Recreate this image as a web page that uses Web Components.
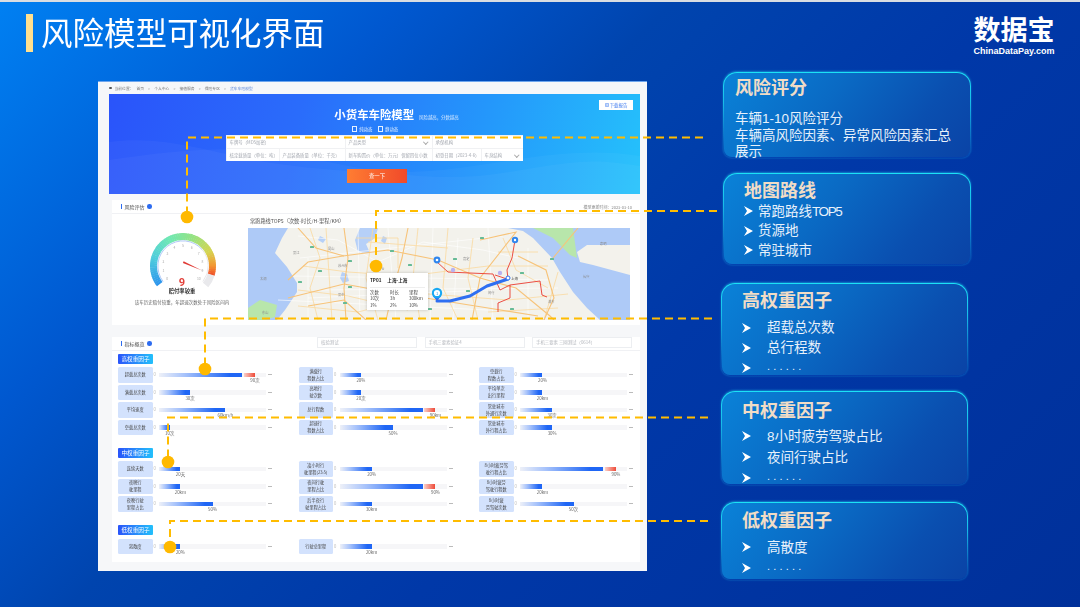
<!DOCTYPE html>
<html lang="zh-CN">
<head>
<meta charset="utf-8">
<title>风险模型可视化界面</title>
<style>
  html, body { margin: 0; padding: 0; }
  body { font-family: "Noto Sans CJK SC", "Noto Sans", sans-serif; }
</style>
</head>
<body>
<risk-slide>
  <slide-header slot="header" heading="风险模型可视化界面"></slide-header>

  <app-panel slot="panel">
    <hero-banner></hero-banner>
    <score-section></score-section>
    <metric-section>
      <metric-group tag="高权重因子">
        <metric-row value="90次" pct="78" over>超载总次数</metric-row>
        <metric-row value="20%" pct="20">满载行<br>程数占比</metric-row>
        <metric-row value="20%" pct="21">空载行<br>程数占比</metric-row>
        <metric-row value="30次" pct="29">满载总次数</metric-row>
        <metric-row value="20次" pct="20">高地行<br>驶次数</metric-row>
        <metric-row value="20km" pct="21">平均单次<br>出行里程</metric-row>
        <metric-row value="60km/h" pct="62">平均速度</metric-row>
        <metric-row value="90km" pct="78" over>总行程数</metric-row>
        <metric-row value="30次" pct="30">常驻城市<br>外通行次数</metric-row>
        <metric-row value="10次" pct="10">空载总次数</metric-row>
        <metric-row value="50%" pct="50">超速行<br>程数占比</metric-row>
        <metric-row value="30%" pct="30">常驻城市<br>外行程占比</metric-row>
      </metric-group>
      <metric-group tag="中权重因子">
        <metric-row value="20天" pct="20">连续天数</metric-row>
        <metric-row value="20%" pct="30">凌小时行<br>驶里程(23:5)</metric-row>
        <metric-row value="90%" pct="78" over>8小时疲劳驾<br>驶行程占比</metric-row>
        <metric-row value="20km" pct="20">夜晚行<br>驶里程</metric-row>
        <metric-row value="90%" pct="78" over>夜间行驶<br>里程占比</metric-row>
        <metric-row value="20km" pct="21">8小时疲劳<br>驾驶行程数</metric-row>
        <metric-row value="50%" pct="50">夜晚行驶<br>里程占比</metric-row>
        <metric-row value="30km" pct="30">后半夜行<br>驶里程占比</metric-row>
        <metric-row value="50次" pct="50">8小时疲<br>劳驾驶次数</metric-row>
      </metric-group>
      <metric-group tag="低权重因子" style="--tg:4px">
        <metric-row value="20%" pct="20">离散度</metric-row>
        <metric-row value="20km" pct="30">行驶总里程</metric-row>
      </metric-group>
    </metric-section>
  </app-panel>

  <info-card slot="cards" heading="风险评分" style="--w:248px;--h:86px;--ml:2px;--pt:2px;--tx:11px;--tb:12px">
    <p>车辆1-10风险评分<br>车辆高风险因素、异常风险因素汇总<br>展示</p>
  </info-card>
  <info-card slot="cards" heading="地图路线" style="--w:248px;--h:92px;--ml:2px;--mt:15px;--pt:4px;--tx:20px;--tb:-2px">
    <card-item style="--gap:5px;--lh:19.5px">常跑路线<span style="letter-spacing:-1.4px">TOP5</span></card-item>
    <card-item style="--gap:5px;--lh:19.5px">货源地</card-item>
    <card-item style="--gap:5px;--lh:19.5px">常驻城市</card-item>
  </info-card>
  <info-card slot="cards" heading="高权重因子" style="--w:247px;--h:93px;--mt:18px;--pt:4px;--tx:20px;--tb:4px">
    <card-item style="--gap:16px;--lh:20px">超载总次数</card-item>
    <card-item style="--gap:16px;--lh:20px">总行程数</card-item>
    <card-item dots style="--gap:16px;--lh:20px">......</card-item>
  </info-card>
  <info-card slot="cards" heading="中权重因子" style="--w:247px;--h:94px;--mt:15px;--pt:6px;--tx:20px;--tb:2px">
    <card-item style="--gap:16px;--lh:21px">8小时疲劳驾驶占比</card-item>
    <card-item style="--gap:16px;--lh:21px">夜间行驶占比</card-item>
    <card-item dots style="--gap:16px;--lh:21px">......</card-item>
  </info-card>
  <info-card slot="cards" heading="低权重因子" style="--w:247px;--h:78px;--mt:17px;--pt:5px;--tx:20px;--tb:3px">
    <card-item style="--gap:16px;--lh:21px">高散度</card-item>
    <card-item dots style="--gap:16px;--lh:21px">......</card-item>
  </info-card>

  <leader-lines slot="overlay"></leader-lines>
</risk-slide>

<script>
// slide frame: header on top, panel and card column below, leader lines over all
class RiskSlide extends HTMLElement {
  connectedCallback() {
    this.attachShadow({ mode: 'open' });
    this.shadowRoot.innerHTML = `
      <style>
        :host {
          display: block;
          position: relative;
          width: 1080px;
          height: 607px;
          overflow: hidden;
          background: linear-gradient(135deg, #0080f2 0%, #0058d0 24%, #0044ae 40%, #0038a8 60%, #00309a 100%);
        }
        .strip { height: 2px; background: #d9dde2; }
        .main { display: flex; padding-left: 98px; gap: 74px; }
        .cards { display: flex; flex-direction: column; }
      </style>
      <div class="strip"></div>
      <slot name="header"></slot>
      <div class="main">
        <slot name="panel"></slot>
        <div class="cards"><slot name="cards"></slot></div>
      </div>
      <slot name="overlay"></slot>
    `;
  }
}

class SlideHeader extends HTMLElement {
  connectedCallback() {
    this.attachShadow({ mode: 'open' });
    this.shadowRoot.innerHTML = `
      <style>
        :host {
          display: flex;
          justify-content: space-between;
          height: 70px;
          padding: 12px 25px 0 26px;
          box-sizing: border-box;
          color: #fff;
        }
        .title { display: flex; gap: 8px; height: 38px; filter: blur(.3px); }
        .bar { width: 7px; background: #ffe08f; }
        h1 { margin: -2px 0 0; font-size: 31.5px; line-height: 38px; font-weight: 400; white-space: nowrap; }
        .logo { margin-top: 3px; width: 82px; text-align: center; font-family: "Liberation Sans", "Noto Sans CJK SC", sans-serif; }
        .cn { font-size: 27px; line-height: 28px; font-weight: 700; white-space: nowrap; }
        .en { margin-top: 1px; font-size: 9px; line-height: 10px; font-weight: 700; white-space: nowrap; }
      </style>
      <div class="title"><div class="bar"></div><h1>${this.getAttribute('heading')}</h1></div>
      <div class="logo"><div class="cn">数据宝</div><div class="en">ChinaDataPay.com</div></div>
    `;
  }
}

// the product screenshot on the left
class AppPanel extends HTMLElement {
  connectedCallback() {
    this.attachShadow({ mode: 'open' });
    this.shadowRoot.innerHTML = `
      <style>
        :host {
          display: block;
          width: 549px;
          height: 490px;
          margin-top: 9px;
          padding-left: 11px;
          padding-right: 7px;
          box-sizing: border-box;
          background: #f6f7f9;
          border-top: 1px solid #6ea6ee;
          filter: blur(.35px);
        }
        .crumb {
          display: flex;
          align-items: center;
          gap: 3px;
          height: 12px;
          font-size: 3.8px;
          color: #777;
          white-space: nowrap;
        }
        .crumb b { width: 2.5px; height: 2.5px; border-radius: 50%; background: #555; }
        .crumb i { font-style: normal; color: #999; margin: 0 1px; }
        .crumb span:last-child { color: #5b86d8; }
      </style>
      <div class="crumb">
        <b></b><span>当前位置：</span><span>首页</span><i>&gt;</i><span>个人中心</span><i>&gt;</i><span>接值服务</span><i>&gt;</i><span>保险专区</span><i>&gt;</i><span>货车车险模型</span>
      </div>
      <slot></slot>
    `;
  }
}

class HeroBanner extends HTMLElement {
  connectedCallback() {
    this.attachShadow({ mode: 'open' });
    this.shadowRoot.innerHTML = `
      <style>
        :host {
          display: block;
          position: relative;
          height: 100px;
          overflow: hidden;
          background: linear-gradient(105deg, #2a54fa 0%, #2a6cfb 35%, #2496fb 68%, #25c2fb 100%);
          color: #fff;
        }
        .wave { position: absolute; left: 0; top: 0; width: 100%; height: 100%; }
        .content { position: relative; display: flex; flex-direction: column; align-items: center; padding-top: 11px; }
        .heading { display: flex; align-items: baseline; gap: 5px; margin-left: 44px; white-space: nowrap; }
        .heading strong { font-size: 11.4px; line-height: 18px; font-weight: 700; }
        .heading small { font-size: 4.4px; color: #d6e8ff; }
        .radios { display: flex; gap: 5px; height: 8px; margin: 2px 0 0 1px; font-size: 4.4px; line-height: 8px; color: #e4f0ff; }
        .radios span { display: flex; align-items: center; gap: 2px; }
        .radios i { width: 3.5px; height: 3.5px; border: .6px solid #e4f0ff; }
        .form {
          width: 297px;
          height: 26px;
          margin-top: 2px;
          margin-left: -1px;
          background: #fff;
          display: grid;
          grid-template-columns: 53px 66px 87px 49px 42px;
          grid-template-rows: 13px 13px;
          font-size: 4.4px;
          line-height: 13px;
          color: #a4a8b0;
          white-space: nowrap;
        }
        .form div { padding-left: 3px; border-top: .5px solid #f0f1f3; border-left: .5px solid #f0f1f3; position: relative; overflow: hidden; }
        .form .a { grid-column: 1 / 3; }
        .form .b { grid-column: 3 / 3; }
        .form .c { grid-column: 4 / 6; }
        .chev::after {
          content: '';
          position: absolute;
          right: 4px;
          top: 4px;
          width: 2.5px;
          height: 2.5px;
          border-right: .6px solid #aaa;
          border-bottom: .6px solid #aaa;
          transform: rotate(45deg);
        }
        button {
          width: 60px;
          height: 14px;
          margin: 8px 0 0 5px;
          padding: 0;
          border: 0;
          background: linear-gradient(90deg, #ff7d32, #f04a2a);
          color: #fff;
          font: inherit;
          font-size: 5.4px;
        }
        .download {
          position: absolute;
          right: 7px;
          top: 6px;
          width: 34px;
          height: 10px;
          background: #fff;
          color: #3b78ee;
          font-size: 4.4px;
          display: flex;
          align-items: center;
          justify-content: center;
          gap: 1px;
        }
        .download svg { width: 4px; height: 4px; }
      </style>
      <svg class="wave" viewBox="0 0 531 100" preserveAspectRatio="none">
        <path d="M0 48C60 40 110 62 170 70S290 82 350 74 470 52 531 62V100H0Z" fill="#fff" opacity=".035"/>
        <path d="M0 66C70 56 130 50 190 62S320 92 400 78 490 66 531 72V100H0Z" fill="#fff" opacity=".035"/>
      </svg>
      <div class="content">
        <div class="heading"><strong>小货车车险模型</strong><small>风险越高，分数越高</small></div>
        <div class="radios"><span><i></i>纯动态</span><span><i></i>静动态</span></div>
        <div class="form">
          <div class="a">车牌号（MD5加密）</div>
          <div class="b chev">产品类型</div>
          <div class="c">承保机构</div>
          <div>核定载质量（单位：吨）</div>
          <div>产品装备质量（单位：千克）</div>
          <div>新车购置价（单位：万元）保留四位小数</div>
          <div>初登日期（2023-4-6）</div>
          <div class="chev">车身结构</div>
        </div>
        <button>查一下</button>
      </div>
      <div class="download">
        <svg viewBox="0 0 8 8" fill="none" stroke="#3b78ee" stroke-width="1"><path d="M1 1h6v6H1zM4 2v3M2.8 4L4 5.2 5.2 4"/></svg>
        下载报告
      </div>
    `;
  }
}

class SectionHead extends HTMLElement {
  connectedCallback() {
    this.attachShadow({ mode: 'open' });
    this.shadowRoot.innerHTML = `
      <style>
        :host {
          display: flex;
          align-items: center;
          height: 14px;
          padding: 0 8px 0 8px;
          border-bottom: .5px solid #f0f1f4;
          box-sizing: border-box;
          font-size: 5px;
          color: #555;
          white-space: nowrap;
        }
        i { width: 1px; height: 5px; background: #2d6cf0; margin: 0 2.5px 0 1px; }
        b { width: 4.5px; height: 4.5px; border-radius: 50%; background: #2d6cf0; margin-left: 2.5px; }
        .end { margin-left: auto; display: flex; }
      </style>
      <i></i><span>${this.getAttribute('label')}</span><b></b>
      <div class="end"><slot></slot></div>
    `;
  }
}

// gauge + map block
class ScoreSection extends HTMLElement {
  connectedCallback() {
    this.attachShadow({ mode: 'open' });
    this.shadowRoot.innerHTML = `
      <style>
        :host {
          display: block;
          height: 125px;
          margin: 6px 0 0 3px;
          background: #fff;
        }
        .updated { font-size: 4px; color: #888; }
        .body { display: flex; padding-right: 9px; }
        .left { width: 136px; flex: none; }
        .right { flex: 1; }
        .map-title { height: 14px; line-height: 14px; padding-left: 2px; font-size: 5.2px; color: #555; white-space: nowrap; }
      </style>
      <section-head label="风险评估"><span class="updated">模型更新时间：2023-03-10</span></section-head>
      <div class="body">
        <div class="left"><gauge-chart value="9"></gauge-chart></div>
        <div class="right">
          <div class="map-title">常跑路线TOP5（次数-时长/H-里程/KM）</div>
          <route-map></route-map>
        </div>
      </div>
    `;
  }
}

class GaugeChart extends HTMLElement {
  connectedCallback() {
    this.attachShadow({ mode: 'open' });
    const cx = 42, cy = 52, r = 29.5;
    const pt = (a, rad) => [cx + rad * Math.cos(a * Math.PI / 180), cy + rad * Math.sin(a * Math.PI / 180)];
    const stops = [[0, [46, 150, 236]], [.22, [80, 205, 220]], [.42, [110, 232, 180]], [.62, [150, 226, 130]], [.8, [214, 212, 80]], [.92, [244, 150, 50]], [1, [238, 70, 40]]];
    const colorAt = t => {
      for (let i = 1; i < stops.length; i++) {
        if (t <= stops[i][0]) {
          const [t0, c0] = stops[i - 1], [t1, c1] = stops[i];
          const k = (t - t0) / (t1 - t0);
          return `rgb(${c0.map((c, j) => Math.round(c + (c1[j] - c) * k)).join(',')})`;
        }
      }
      return 'rgb(238,70,40)';
    };
    // colored arc is drawn as short pieces, svg has no conic gradient
    const startA = 142, endA = 377, n = 60;
    let arc = '';
    for (let i = 0; i < n; i++) {
      const a0 = startA + (endA - startA) * i / n, a1 = startA + (endA - startA) * (i + 1.2) / n;
      const [x0, y0] = pt(a0, r), [x1, y1] = pt(a1, r);
      arc += `<path d="M${x0.toFixed(2)} ${y0.toFixed(2)}A${r} ${r} 0 0 1 ${x1.toFixed(2)} ${y1.toFixed(2)}" stroke="${colorAt(i / n)}"/>`;
    }
    const arcPath = (a0, a1, rad) => {
      const [x0, y0] = pt(a0, rad), [x1, y1] = pt(a1, rad);
      return `M${x0.toFixed(2)} ${y0.toFixed(2)}A${rad} ${rad} 0 ${a1 - a0 > 180 ? 1 : 0} 1 ${x1.toFixed(2)} ${y1.toFixed(2)}`;
    };
    let ticks = '';
    for (let i = 0; i <= 10; i++) {
      const [x, y] = pt(142 + 256 * i / 10, 20);
      ticks += `<text x="${x.toFixed(1)}" y="${(y + 1.2).toFixed(1)}" text-anchor="middle" font-size="3.4" fill="#aaa">${i}</text>`;
    }
    this.shadowRoot.innerHTML = `
      <style>
        :host { display: block; text-align: center; color: #333; }
        svg { display: block; width: 84px; height: 74px; margin: 0 0 0 29px; overflow: visible; }
        .name { font-size: 5.3px; line-height: 7px; font-weight: 700; margin: 0 0 0 4px; white-space: nowrap; }
        .desc { font-size: 4.5px; line-height: 7px; color: #666; margin: 3.5px 0 0 4px; white-space: nowrap; }
      </style>
      <svg viewBox="0 0 84 74">
        <g fill="none" stroke-width="7">${arc}</g>
        <path d="${arcPath(17, 40, r)}" fill="none" stroke="#e9e9ec" stroke-width="7"/>
        <path d="${arcPath(142, 320, 25.2)}" fill="none" stroke="#8fb0f3" stroke-width=".7"/>
        <path d="${arcPath(320, 398, 25.2)}" fill="none" stroke="#dcdde2" stroke-width=".7"/>
        ${ticks}
        <polygon points="61,56.500 42.600,47.300 41.900,48.900" fill="#e03a35"/>
        <text x="41" y="72" text-anchor="middle" font-family="Roboto, sans-serif" font-size="11" font-weight="700" fill="#e2403a">${this.getAttribute('value')}</text>
      </svg>
      <div class="name">赔付率较重</div>
      <div class="desc">该车历史赔付较重，年超速次数处于风险区间内</div>
    `;
  }
}

class RouteMap extends HTMLElement {
  connectedCallback() {
    this.attachShadow({ mode: 'open' });
    const shields = [[50,53],[100,32],[142,22],[100,58],[62,18],[160,36],[205,30],[232,9],[272,44],[302,30],[218,62],[135,64],[95,74],[180,80],[262,80],[70,42]];
    const labels = [[80,22,'昆山'],[45,26,'吴江'],[90,39,'苏州市'],[130,42,'太仓'],[12,52,'太湖'],[14,86,'东山'],[215,32,'嘉定'],[240,66,'闵行'],[335,50,'长兴'],[352,17,'崇明'],[300,75,'浦东'],[150,74,'青浦'],[90,68,'吴中']];
    this.shadowRoot.innerHTML = `
      <style>
        :host { display: block; position: relative; width: 382px; height: 92px; overflow: hidden; background: #f3f2ec; }
        svg { display: block; width: 100%; height: 100%; }
        .tip {
          position: absolute;
          left: 119px;
          top: 45px;
          width: 61px;
          height: 37px;
          padding: 3px 3px 0;
          box-sizing: border-box;
          background: #fff;
          box-shadow: 0 0 3px rgba(0, 0, 0, .22);
          font-size: 4.4px;
          line-height: 6.5px;
          color: #444;
        }
        .tip strong { display: flex; gap: 6px; padding: 1px 0 3px; border-bottom: .5px solid #eee; margin-bottom: 1px; font-size: 4.6px; color: #222; white-space: nowrap; }
        .tip div { display: grid; grid-template-columns: 20px 19px 1fr; white-space: nowrap; }
      </style>
      <svg viewBox="0 0 382 92">
        <path d="M0 0H40L34 10 27 25 39 39 49 55V64L37 82 29 92H0Z" fill="#aecaf7"/>
        <path d="M0 80 12 72 29 77 27 89 17 92H0Z" fill="#b8e6ab"/>
        <path d="M112 0h18l-3 10-9 6 4 9-12-1-3-12ZM94 44l5 2 2 7-6 2-3-5ZM135 8l4 2-2 6-4-3ZM150 50l6 3-2 7-6-3ZM72 8l6 3-3 4-5-3Z" fill="#b6d0f8"/>
        <path d="M260 0H382V92H352L339 80 325 64 312 44 304 30 285 10 275 3Z" fill="#aecaf7"/>
        <path d="M285 0H325L329 30 322 27 305 10Z" fill="#b8e6ab"/>
        <path d="M329 24 339 17H382V47L345 37 332 34Z" fill="#f3f2ec"/>
        <g fill="none" stroke="#fff" stroke-width=".6">
          <path d="M50 8 90 12 130 34 175 14 235 22 270 30M60 30 60 92M110 0 112 92M140 0 148 92M185 0 182 92M210 10 205 92M240 0 245 92M280 20 280 92M30 72 240 82M60 70 240 62M45 48 300 52M52 30 255 8M70 62 310 60"/>
        </g>
        <g fill="none" stroke="#fad9a0" stroke-width=".8">
          <path d="M62 0 72 30 62 60 70 92M125 0 118 50 130 92M170 0 165 50 172 92M225 10 220 50 230 92M55 38 100 44 160 48 240 38 300 38M50 78 110 84 180 66 260 72 320 66M255 10 268 42 300 60M310 44 296 92M78 0 84 92M108 10 150 10 150 40M200 0 195 60 210 92M50 62 100 68 160 82M120 14 200 20M250 24 290 24M240 84 310 80"/>
        </g>
        <g fill="none" stroke="#f7c379" stroke-width="1.1">
          <path d="M40 52 60 34 95 28 140 22 190 32 232 50 268 60 302 88 306 92"/>
          <path d="M96 0 100 30 96 60 98 92"/>
          <path d="M50 0 68 20 96 28"/>
          <path d="M160 0 154 30 145 62 138 92"/>
          <path d="M40 70 96 56 140 64 190 72 240 80 290 88"/>
          <path d="M305 30 330 0"/>
          <path d="M232 12 268 4 232 50 224 92"/>
          <path d="M270 28 298 42 306 70 296 92"/>
          <path d="M60 78 96 72 118 92"/>
        </g>
        ${shields.map(([x, y]) => `<rect x="${x}" y="${y}" width="4" height="2" rx=".5" fill="#66bb96"/>`).join('')}
        ${labels.map(([x, y, t]) => `<text x="${x}" y="${y}" font-size="3.2" fill="#888">${t}</text>`).join('')}
        <g fill="none" stroke="#ea3b30" stroke-width=".9" stroke-linejoin="round">
          <path d="M189 34 200 44 222 45 245 46 252 62 262 57 292 53 294 67 299 69"/>
          <path d="M267 12 264 30 259 42 260 51"/>
          <path d="M262 57 262 70 250 75 250 84"/>
          <path d="M247 47 259 51"/>
        </g>
        <path d="M189 73 202 73 222 68 239 58 260 51" fill="none" stroke="#2e6ff2" stroke-width="3" stroke-linecap="round" stroke-linejoin="round"/>
        <circle cx="205" cy="42" r="2.2" fill="#b9b2f0"/>
        <circle cx="252" cy="45" r="2.2" fill="#b9b2f0"/>
        <circle cx="189" cy="32" r="3.4" fill="#2f86ee"/><circle cx="189" cy="32" r="1.3" fill="#fff"/>
        <circle cx="267" cy="12" r="3.2" fill="#2f86ee"/><circle cx="267" cy="12" r="1.2" fill="#fff"/>
        <circle cx="260" cy="50" r="2" fill="#fff" stroke="#2e6ff2" stroke-width="1"/>
        <text x="263" y="52" font-size="3.4" fill="#333">上海</text>
        <path d="M189 73 184.800 68 193.200 68Z" fill="#2e6ff2"/>
        <circle cx="189" cy="65" r="5.200" fill="#18a8f2"/>
        <circle cx="189" cy="65" r="3.100" fill="#fff"/>
        <text x="189" y="66.500" font-size="4" text-anchor="middle" fill="#1590e0">1</text>
      </svg>
      <div class="tip">
        <strong><span>TP01</span><span>上海-上海</span></strong>
        <div><span>次数</span><span>时长</span><span>里程</span></div>
        <div><span>10次</span><span>3h</span><span>300km</span></div>
        <div><span>1%</span><span>2%</span><span>10%</span></div>
      </div>
    `;
  }
}

class MetricSection extends HTMLElement {
  connectedCallback() {
    this.attachShadow({ mode: 'open' });
    this.shadowRoot.innerHTML = `
      <style>
        :host {
          display: block;
          height: 225px;
          margin: 12px 0 0 3px;
          padding-top: 0;
          box-sizing: border-box;
          background: #fff;
        }
        .inputs { display: flex; gap: 7.5px; padding-bottom: 2px; }
        .inputs div {
          width: 100px;
          height: 10.5px;
          padding-left: 3px;
          box-sizing: border-box;
          border: .5px solid #eceef1;
          font-size: 4.4px;
          line-height: 9.5px;
          color: #b4b7bd;
          white-space: nowrap;
        }
      </style>
      <section-head label="指标概览">
        <div class="inputs"><div>核验测试</div><div>手机三要素验证4</div><div>手机三要素 三网测试（0614）</div></div>
      </section-head>
      <slot></slot>
    `;
  }
}

class MetricGroup extends HTMLElement {
  connectedCallback() {
    this.attachShadow({ mode: 'open' });
    this.shadowRoot.innerHTML = `
      <style>
        :host { display: block; padding: 3px 0 10px 6px; }
        .tag {
          width: 35px;
          height: 10px;
          margin-bottom: var(--tg, 3px);
          border-radius: 1px;
          background: linear-gradient(90deg, #2a54fa, #23c0fb);
          color: #fff;
          font-size: 5.6px;
          line-height: 10px;
          text-align: center;
          white-space: nowrap;
        }
        .grid { display: grid; grid-template-columns: repeat(3, 153px); column-gap: 27.5px; row-gap: 2px; }
      </style>
      <div class="tag">${this.getAttribute('tag')}</div>
      <div class="grid"><slot></slot></div>
    `;
  }
}

class MetricRow extends HTMLElement {
  connectedCallback() {
    this.attachShadow({ mode: 'open' });
    const pct = this.getAttribute('pct');
    const over = this.hasAttribute('over');
    this.shadowRoot.innerHTML = `
      <style>
        :host { display: flex; height: 15.5px; font-size: 4.2px; color: #666; white-space: nowrap; }
        .label {
          flex: none;
          width: 34.5px;
          display: flex;
          align-items: center;
          justify-content: center;
          text-align: center;
          background: #d3e2fd;
          border-radius: 1.5px;
          color: #444;
          line-height: 7px;
        }
        .zero { flex: none; width: 5.5px; margin-left: 1px; line-height: 15.5px; color: #bbb; }
        .col { flex: none; width: 107px; padding-top: 5.5px; box-sizing: border-box; }
        .track { display: flex; height: 4.5px; background: #f6f6f8; }
        .fill { width: ${pct}%; background: linear-gradient(90deg, rgba(38, 106, 246, .04), #a9c4fb 30%, #1f66f5 85%); }
        .over { width: 11px; margin-left: 1.5px; background: linear-gradient(90deg, #fad0c9, #ee4a38); }
        .val { width: fit-content; margin-left: ${over ? `calc(${pct}% + 12.5px)` : pct + '%'}; transform: translateX(-50%); font-size: 4.4px; line-height: 7.5px; }
        .dash { flex: none; width: 4px; height: .7px; margin: 7.4px 0 0 2px; background: #bbb; }
      </style>
      <div class="label"><span><slot></slot></span></div>
      <div class="zero">0</div>
      <div class="col">
        <div class="track"><div class="fill"></div>${over ? '<div class="over"></div>' : ''}</div>
        <div class="val">${this.getAttribute('value')}</div>
      </div>
      <div class="dash"></div>
    `;
  }
}

class InfoCard extends HTMLElement {
  connectedCallback() {
    this.attachShadow({ mode: 'open' });
    this.shadowRoot.innerHTML = `
      <style>
        :host {
          display: block;
          width: var(--w);
          height: var(--h);
          margin-top: var(--mt, 0);
          margin-left: var(--ml, 0);
          padding: var(--pt) 0 0 var(--tx);
          box-sizing: border-box;
          border: 1.5px solid transparent;
          border-radius: 14px 14px 9px 9px;
          background:
            linear-gradient(128deg, #0a82d8 0%, #0a6ac4 40%, #0a4fb0 75%, #0a43a6 100%) padding-box,
            linear-gradient(180deg, #1ce2f6 0%, #18bde8 35%, rgba(20, 120, 220, .15) 100%) border-box;
          box-shadow: 0 -.5px 2px rgba(40, 220, 250, .45);
          color: #e8f1fb;
          font-family: "Liberation Sans", "Noto Sans CJK SC", sans-serif;
          font-size: 13.5px;
        }
        h2 {
          margin: 0 0 calc(var(--tb) + .5px);
          padding-top: 1.5px;
          font-size: 18px;
          line-height: 22px;
          font-weight: 700;
          color: #f0dcc6;
          white-space: nowrap;
        }
        ::slotted(p) {
          margin: 0;
          line-height: 16.5px;
          white-space: nowrap;
        }
      </style>
      <h2>${this.getAttribute('heading')}</h2>
      <slot></slot>
    `;
  }
}

class CardItem extends HTMLElement {
  connectedCallback() {
    this.attachShadow({ mode: 'open' });
    const dots = this.hasAttribute('dots');
    this.shadowRoot.innerHTML = `
      <style>
        :host { display: flex; align-items: center; gap: var(--gap); height: var(--lh); white-space: nowrap; }
        svg { flex: none; width: 9px; height: 10px; margin-top: 3px; }
        span { ${dots ? 'letter-spacing: 3.2px; font-size: 11px; line-height: 11px;' : ''} }
      </style>
      <svg viewBox="0 0 9 10"><path d="M0 0 9 5 0 10 3 5Z" fill="#fff"/></svg>
      <span><slot></slot></span>
    `;
  }
}

// dashed callouts from the cards down into the screenshot
class LeaderLines extends HTMLElement {
  connectedCallback() {
    this.attachShadow({ mode: 'open' });
    const lines = [
      [703, 137.5, 187, 217],
      [717, 211, 376, 266],
      [712, 318.5, 205, 369],
      [708, 417.5, 168, 462],
      [708, 521, 170, 547],
    ];
    this.shadowRoot.innerHTML = `
      <style>
        :host { position: absolute; left: 0; top: 0; width: 1080px; height: 607px; pointer-events: none; }
        svg { display: block; width: 100%; height: 100%; }
      </style>
      <svg viewBox="0 0 1080 607">
        ${lines.map(([x1, y, x2, y2]) => `
          <path d="M${x1} ${y}H${x2}V${y2}" fill="none" stroke="#ffbc00" stroke-width="2" stroke-dasharray="8 5"/>
          <circle cx="${x2}" cy="${y2}" r="6.300" fill="#ffb900"/>`).join('')}
      </svg>
    `;
  }
}

customElements.define('risk-slide', RiskSlide);
customElements.define('slide-header', SlideHeader);
customElements.define('app-panel', AppPanel);
customElements.define('hero-banner', HeroBanner);
customElements.define('section-head', SectionHead);
customElements.define('score-section', ScoreSection);
customElements.define('gauge-chart', GaugeChart);
customElements.define('route-map', RouteMap);
customElements.define('metric-section', MetricSection);
customElements.define('metric-group', MetricGroup);
customElements.define('metric-row', MetricRow);
customElements.define('info-card', InfoCard);
customElements.define('card-item', CardItem);
customElements.define('leader-lines', LeaderLines);
</script>
</body>
</html>
